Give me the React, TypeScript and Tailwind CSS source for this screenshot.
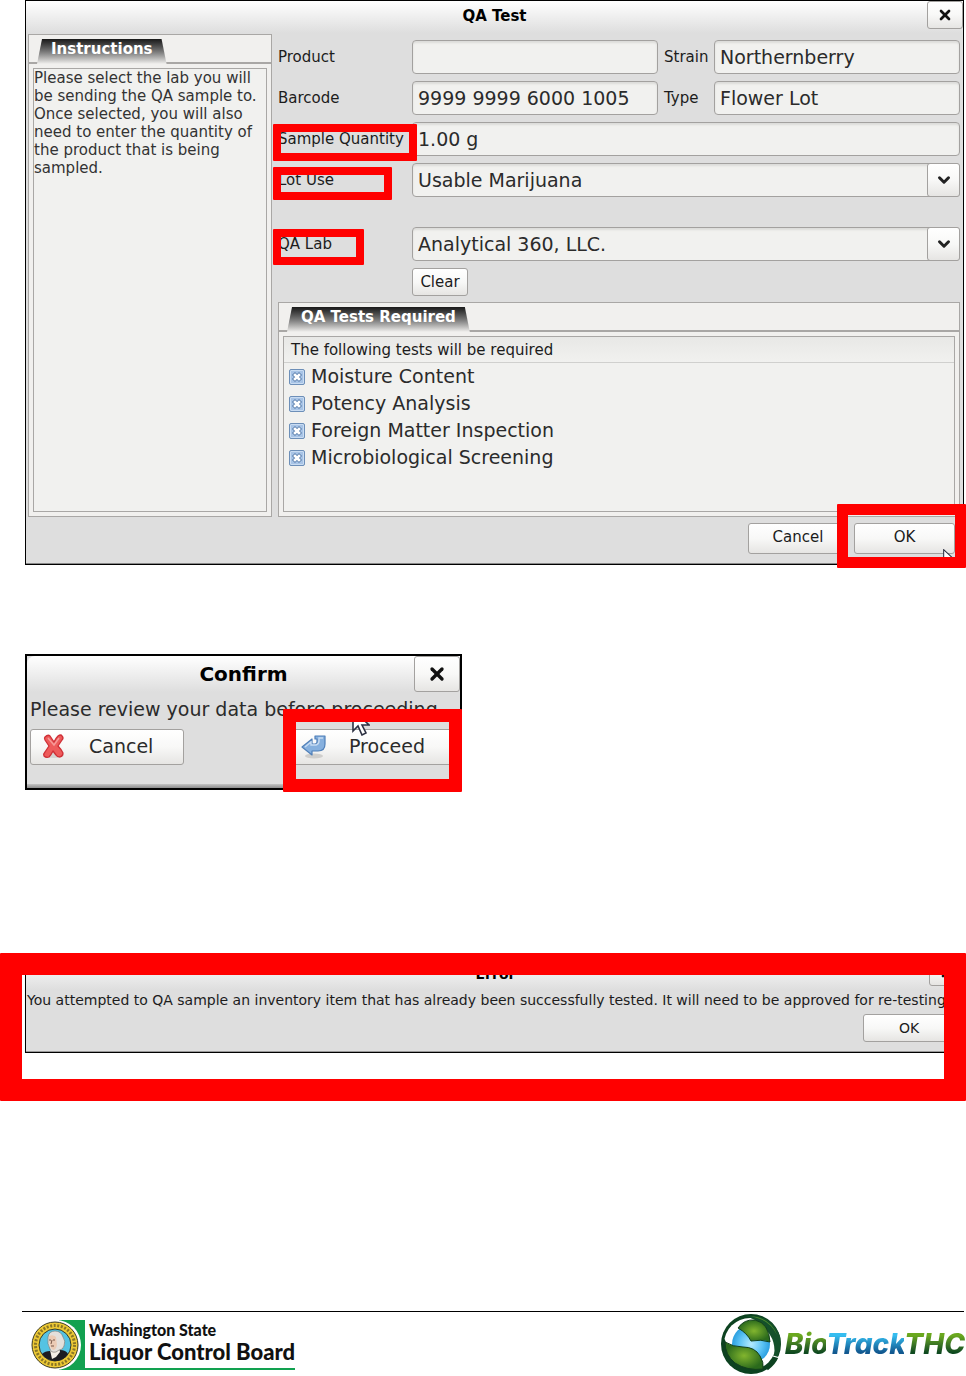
import { useState } from 'react';
import type { ReactNode } from 'react';
import { ChevronDown, X } from 'lucide-react';
import clsx from 'clsx';

const REQUIRED_TESTS = ['Moisture Content', 'Potency Analysis', 'Foreign Matter Inspection', 'Microbiological Screening'];

const BUTTON = 'rounded-[3px] border border-[#a3a19f] bg-linear-to-b from-white via-[#f8f8f7] to-[#e6e5e3]';
const FIELD =
  'h-[34px] w-full min-w-0 rounded-[4px] border border-[#a3a19f] bg-[#f1f1ef] px-[5px] text-[19px] text-[#2b2b2b] shadow-[inset_0_2px_2px_#dcdcda] outline-none';

// Red callout frame drawn over the control that the step is about
function Callout({ className }: { className: string }) {
  return <span aria-hidden="true" className={clsx('pointer-events-none absolute z-10 rounded-[1px] border-[#ff0000]', className)} />;
}

function Cursor({ className }: { className: string }) {
  return (
    <svg aria-hidden="true" viewBox="0 0 18 27" className={clsx('pointer-events-none absolute', className)}>
      <path d="M1 1v21l5-5 4 9 4-2-4-8h7z" fill="#fff" stroke="#2d3142" strokeWidth="1.6" />
    </svg>
  );
}

interface TitleBarProps { title: string; large?: boolean; small?: boolean }

function TitleBar({ title, large, small }: TitleBarProps) {
  return (
    <header
      className={clsx(
        'grid items-start bg-linear-to-b from-white to-[#dedede]',
        large ? 'h-9 grid-cols-[46px_1fr_46px] rounded-tl-lg' : 'h-8 grid-cols-[36px_1fr_36px]',
      )}
    >
      <h2
        className={clsx(
          'col-start-2 text-center font-bold text-black',
          large && 'text-[20px] leading-9',
          small && 'text-[14px] leading-8',
          !large && !small && 'text-[15px] leading-[30px]',
        )}
      >
        {title}
      </h2>
      <button type="button" aria-label={`Close ${title}`} className={clsx(BUTTON, 'flex items-center justify-center', large ? 'h-9' : 'h-7')}>
        <X className={large ? 'size-5' : 'size-4'} strokeWidth={4} color="#111" />
      </button>
    </header>
  );
}

function TabPanel({ title, children }: { title: string; children: ReactNode }) {
  return (
    <section className="flex flex-col border border-[#a9a7a5] bg-[#f1f0ee]">
      <div className="flex h-[29px] items-end border-b-2 border-[#a9a7a5] pl-2">
        <h3 className="-mb-[2px] h-[25px] bg-linear-to-b from-[#1a1a1a] via-[#777] to-[#f1f0ee] px-[14px] text-[15px] leading-5 font-bold text-white [clip-path:polygon(5px_0,calc(100%-5px)_0,100%_100%,0_100%)]">
          {title}
        </h3>
      </div>
      <div className="flex grow flex-col p-1">
        <div className="grow border border-[#a9a7a5] bg-[#f1f1ef]">{children}</div>
      </div>
    </section>
  );
}

function Dropdown({ id, options }: { id: string; options: string[] }) {
  return (
    <div className="relative col-span-3">
      <select id={id} className={clsx(FIELD, 'appearance-none')}>
        {options.map((o) => <option key={o}>{o}</option>)}
      </select>
      <span className={clsx(BUTTON, 'pointer-events-none absolute inset-y-0 right-0 flex w-[33px] items-center justify-center')}>
        <ChevronDown className="size-[18px]" strokeWidth={4} color="#222" />
      </span>
    </div>
  );
}

function TestRow({ name }: { name: string }) {
  const [required, setRequired] = useState(true);
  return (
    <label className="flex h-[27px] items-center gap-[6px] pl-[5px] text-[19px] text-[#2b2b2b]">
      <span className="relative size-4">
        <input
          type="checkbox"
          checked={required}
          onChange={(e) => setRequired(e.target.checked)}
          className="block size-4 appearance-none rounded-[2px] border border-[#6d8fb8] bg-[#a8c4e6] shadow-[inset_0_0_0_1px_#c9dcf2]"
        />
        {required && (
          <svg aria-hidden="true" viewBox="0 0 16 16" className="pointer-events-none absolute inset-0 size-4">
            <path d="M6 6l4 4M10 6l-4 4" stroke="#5f83b0" strokeWidth="4.4" strokeLinecap="square" />
            <path d="M6 6l4 4M10 6l-4 4" stroke="#fff" strokeWidth="2.6" strokeLinecap="square" />
          </svg>
        )}
      </span>
      {name}
    </label>
  );
}

function QaTestDialog() {
  return (
    <section className="mr-[2px] ml-[25px] border border-black bg-[#dedede] text-[15px] text-[#1c1c1c]">
      <TitleBar title="QA Test" />
      <div className="grid grid-cols-[244px_1fr] gap-[6px] px-[2px] pt-px pr-[3px]">
        <TabPanel title="Instructions">
          <p className="text-[15px] leading-[18px] text-[#333]">
            Please select the lab you will be sending the QA sample to. Once selected, you will also need to enter the quantity of the
            product that is being sampled.
          </p>
        </TabPanel>
        <div className="min-w-0 pt-[6px]">
          <div className="grid grid-cols-[128px_1fr_44px_1fr] items-stretch gap-x-[6px] gap-y-[7px]">
            <label htmlFor="product" className="leading-[34px]">Product</label>
            <input id="product" className={FIELD} />
            <label htmlFor="strain" className="leading-[34px]">Strain</label>
            <input id="strain" defaultValue="Northernberry" className={FIELD} />

            <label htmlFor="barcode" className="leading-[34px]">Barcode</label>
            <input id="barcode" defaultValue="9999 9999 6000 1005" className={FIELD} />
            <label htmlFor="type" className="leading-[34px]">Type</label>
            <input id="type" defaultValue="Flower Lot" className={FIELD} />

            <label htmlFor="quantity" className="relative leading-[34px] whitespace-nowrap">
              Sample Quantity
              <Callout className="top-[2px] -right-[11px] -bottom-[5px] -left-[5px] border-8" />
            </label>
            <input id="quantity" defaultValue="1.00 g" className={clsx(FIELD, 'col-span-3')} />

            <label htmlFor="lot-use" className="relative leading-[34px]">
              Lot Use
              <Callout className="top-1 -bottom-[3px] -left-[5px] w-[119px] border-8" />
            </label>
            <Dropdown id="lot-use" options={['Usable Marijuana', 'Extract']} />
          </div>
          <div className="mt-[30px] grid grid-cols-[128px_1fr_44px_1fr] gap-x-[6px] gap-y-[7px]">
            <label htmlFor="qa-lab" className="relative leading-[34px]">
              QA Lab
              <Callout className="top-[2px] -bottom-1 -left-[5px] w-[91px] border-8" />
            </label>
            <Dropdown id="qa-lab" options={['Analytical 360, LLC.']} />
            <button type="button" className={clsx(BUTTON, 'col-start-2 h-7 w-14')}>Clear</button>
          </div>
          <div className="mt-[6px]">
            <TabPanel title="QA Tests Required">
              <div className="min-h-[174px]">
                <h4 className="h-[26px] border-b border-[#d0d0ce] bg-linear-to-b from-[#e8e8e6] to-[#f1f1ef] pl-[7px] leading-[26px]">
                  The following tests will be required
                </h4>
                {REQUIRED_TESTS.map((t) => <TestRow key={t} name={t} />)}
              </div>
            </TabPanel>
          </div>
        </div>
      </div>
      <footer className="flex justify-end gap-[6px] border-b border-[#888] pt-[6px] pr-2 pb-[9px]">
        <button type="button" className={clsx(BUTTON, 'h-[31px] w-[100px] pb-[2px]')}>Cancel</button>
        <div className="relative">
          <button type="button" className={clsx(BUTTON, 'h-[31px] w-[101px] pb-[2px]')}>OK</button>
          <Cursor className="top-[26px] right-0 w-3" />
          <Callout className="-top-[19px] -right-[11px] -bottom-[14px] -left-[17px] border-[11px]" />
        </div>
      </footer>
    </section>
  );
}

function CancelIcon() {
  return (
    <svg aria-hidden="true" viewBox="0 0 24 26" className="h-[26px] w-6">
      <ellipse cx="12" cy="22" rx="10" ry="3" fill="#d5d3d1" />
      <path
        d="M3 4q3-3 5-1 2 3 4 6 2-4 4-6 3-2 4 0 2 2 0 4l-4 6q3 3 5 7 0 3-3 4-3 0-4-2l-3-4q-2 4-4 6-3 1-5-1-1-2 1-4l4-6-4-6q-1-2 0-3z"
        fill="#ee5b5b"
        stroke="#cf2f36"
        strokeWidth="1.3"
        strokeLinejoin="round"
      />
      <path d="M6 5l6 7 5-7" fill="none" stroke="#f79a98" strokeWidth="1.5" />
    </svg>
  );
}

function ProceedIcon() {
  return (
    <svg aria-hidden="true" viewBox="0 0 26 26" className="size-[26px]">
      <ellipse cx="14" cy="23" rx="9" ry="2.5" fill="#cfcecc" />
      <path
        d="M2 14l10-8v5h3q2 0 2-2V6h-2V3h10v8q0 7-7 7h-6v4z"
        fill="#86b0de"
        stroke="#4f7fb8"
        strokeWidth="1.2"
        strokeLinejoin="round"
      />
      <path d="M5 14l6-5v3h5q3-1 3-4V5h4" fill="none" stroke="#c6dbf2" strokeWidth="1.4" />
    </svg>
  );
}

function ConfirmDialog() {
  return (
    <section className="relative mt-[89px] ml-[25px] w-[437px] max-w-full border-2 border-black bg-[#dedede] text-[19px] text-[#2b2b2b]">
      <TitleBar title="Confirm" large />
      <p className="pl-[3px] leading-[34px] whitespace-nowrap">Please review your data before proceeding.</p>
      <div className="flex justify-between pt-[3px] pr-1 pb-[19px] pl-[3px]">
        <button type="button" className={clsx(BUTTON, 'flex h-9 w-[154px] items-center gap-[23px] pb-[2px] pl-[11px]')}>
          <CancelIcon />
          Cancel
        </button>
        <div className="relative">
          <button type="button" className={clsx(BUTTON, 'flex h-9 w-[168px] items-center gap-[23px] pb-[2px] pl-[11px]')}>
            <ProceedIcon />
            Proceed
          </button>
          <Cursor className="-top-5 left-16 w-[18px]" />
          <Callout className="-top-5 -right-[6px] -bottom-[27px] -left-[5px] border-[13px]" />
        </div>
      </div>
      <div className="h-1 bg-linear-to-b from-[#c4c4c4] to-[#8c8c8c]" />
    </section>
  );
}

function ErrorDialog() {
  return (
    <div className="relative mt-[163px] overflow-hidden pt-1 pb-12">
      <section className="ml-[25px] border border-black bg-[#dedede] text-[14px] text-[#1c1c1c]">
        <TitleBar title="Error" small />
        <p className="overflow-hidden pl-px leading-5 whitespace-nowrap">
          You attempted to QA sample an inventory item that has already been successfully tested. It will need to be approved for
          re-testing.
        </p>
        <div className="flex justify-end border-b border-[#999] pt-1 pr-[10px] pb-[9px]">
          <button type="button" className={clsx(BUTTON, 'h-7 w-[92px]')}>OK</button>
        </div>
      </section>
      <Callout className="inset-0 border-[22px]" />
    </div>
  );
}

function StateSeal() {
  return (
    <svg aria-hidden="true" viewBox="0 0 54 50" className="h-[50px] w-[54px]">
      <path d="M28 0h26v50H28z" fill="#12a150" />
      <circle cx="25" cy="25" r="25" fill="#fff" />
      <circle cx="24" cy="25" r="23" fill="#edc935" stroke="#3b3a22" />
      <circle cx="24" cy="25" r="19.5" fill="none" stroke="#8a7626" strokeWidth="3" strokeDasharray="2 1.6" />
      <circle cx="24" cy="25" r="16" fill="#55c3e3" stroke="#3b3a22" />
      <path d="M11 34q3-3 8-3l5 2 5-3q6 0 8 4-4 7-13 7-9-1-13-7z" fill="#1d1d22" />
      <path d="M19 30l6 2 3-5 1 5-4 5-4 2z" fill="#f4eee6" />
      <path d="M17 17q1-6 7-6t8 6q3 4 1 9-1 4-5 4l-3 2q-5 1-6-3-3-5-2-12z" fill="#e4e0dc" stroke="#77706a" strokeWidth=".6" />
      <path d="M18 16q4-2 7 1l1 8q-1 5-4 5-4-2-4-14z" fill="#eccbb5" />
      <path d="M18 20h2M22 20h2M20 26h3M21 20l-1 4" stroke="#5b3b2e" strokeWidth=".8" />
    </svg>
  );
}

function GlobeLogo() {
  return (
    <svg aria-hidden="true" viewBox="0 0 60 60" className="size-[60px] shrink-0">
      <defs>
        <radialGradient id="globe">
          <stop offset="0" stopColor="#b5ebff" />
          <stop offset=".6" stopColor="#5cc3f5" />
          <stop offset="1" stopColor="#2b9fe0" />
        </radialGradient>
        <radialGradient id="leaf">
          <stop offset="0" stopColor="#82b52e" />
          <stop offset="1" stopColor="#2b6a1c" />
        </radialGradient>
      </defs>
      <circle cx="30" cy="30" r="30" fill="#0d4220" />
      <circle cx="29" cy="30" r="26" fill="#fff" />
      <circle cx="30" cy="30" r="19" fill="url(#globe)" />
      {/* right-hand sweep that the upper leaf grows out of */}
      <path d="M24 2Q50-1 59 22q2 11-3 22l-3-1q2-13-4-22Q42 7 24 2z" fill="#14502a" />
      <path d="M30 2q20 2 26 19-6-12-17-16z" fill="#4a8a2c" />
      <path d="M17 14Q23 5 34 6q14 3 15 22-9-3-19-1-4-8-13-13z" fill="url(#leaf)" stroke="#123f1c" />
      {/* left-hand sweep under the lower leaf */}
      <path d="M2 23Q-1 44 13 54q9 6 20 5l10-4Q13 54 4 26z" fill="#0d4220" />
      <path d="M4 28q8 5 18 5 12 0 17 9 4 6 3 13-16 2-28-6Q4 41 4 28z" fill="url(#leaf)" stroke="#123f1c" />
      <path d="M56 43q-3 7-10 12" fill="none" stroke="#0d4220" strokeWidth="3" />
      <path d="M52 42l7 2" stroke="#fff" strokeWidth="1.2" />
    </svg>
  );
}

function PageFooter() {
  return (
    <footer className="mt-[210px] mr-[2px] ml-[22px] border-t border-black">
      <div className="flex items-start justify-between">
        <div className="mt-2 ml-[9px] flex">
          <StateSeal />
          <div className="border-b-2 border-[#12a150] pl-1 font-['Lato',sans-serif] font-black whitespace-nowrap text-[#111]">
            <p className="text-[16px] leading-5">Washington State</p>
            <p className="text-[22px] leading-6">Liquor Control Board</p>
          </div>
        </div>
        <div className="-mr-[2px] mt-[2px] flex items-center gap-1">
          <GlobeLogo />
          <p className="font-['Inter',sans-serif] text-[28px] font-extrabold italic">
            <span className="bg-linear-to-b from-[#6aa81e] from-25% to-[#0f4a20] to-75% bg-clip-text text-transparent">Bio</span>
            <span className="bg-linear-to-b from-[#35bdf0] from-25% to-[#12588f] to-75% bg-clip-text text-transparent">Track</span>
            <span className="bg-linear-to-b from-[#6aa81e] from-25% to-[#0f4a20] to-75% bg-clip-text pr-px text-transparent">THC</span>
          </p>
        </div>
      </div>
    </footer>
  );
}

export default function App() {
  return (
    <main className="w-full overflow-hidden bg-white font-['DejaVu_Sans',sans-serif]">
      <QaTestDialog />
      <ConfirmDialog />
      <ErrorDialog />
      <PageFooter />
    </main>
  );
}
